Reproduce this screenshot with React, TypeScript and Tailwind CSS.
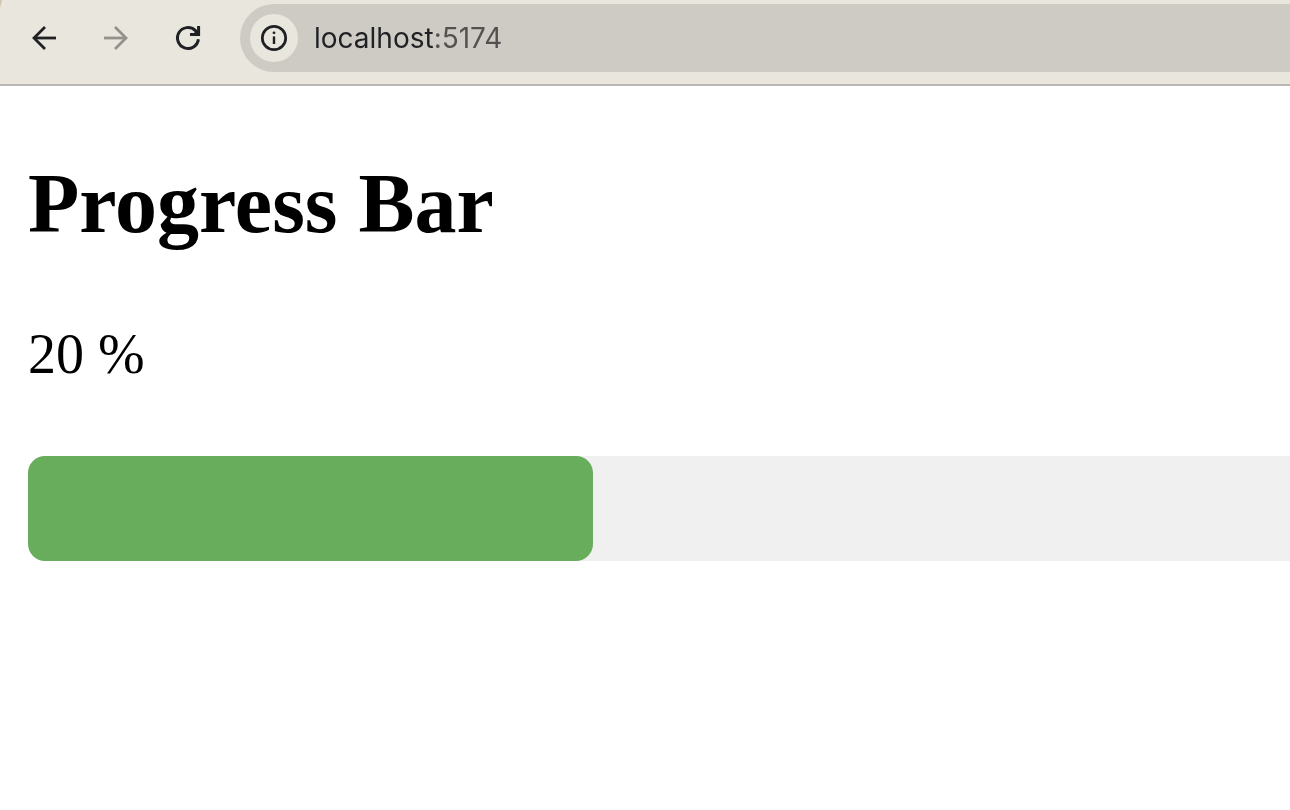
import React from "react";

const PROGRESS = 20;

function BackIcon() {
  return (
    <svg viewBox="0 0 32 32" className="size-8" fill="none" stroke="currentColor" strokeWidth="2.8" aria-hidden="true">
      <path d="M28 16H6" />
      <path d="M17 5L6 16L17 27" />
    </svg>
  );
}

function ForwardIcon() {
  return (
    <svg viewBox="0 0 32 32" className="size-8" fill="none" stroke="currentColor" strokeWidth="2.8" aria-hidden="true">
      <path d="M4 16H26" />
      <path d="M15 5L26 16L15 27" />
    </svg>
  );
}

function ReloadIcon() {
  return (
    <svg viewBox="0 0 32 32" className="size-8" fill="none" stroke="currentColor" strokeWidth="3" aria-hidden="true">
      <path d="M26.4 17.3A10.5 10.5 0 1 1 23.2 8.4L26 11.5" />
      <path d="M26.6 4V12.5H18" />
      <path d="M21 12L25.5 7.5V12Z" fill="currentColor" stroke="none" />
    </svg>
  );
}

function InfoIcon() {
  return (
    <svg viewBox="0 0 32 32" className="size-8" fill="none" stroke="currentColor" strokeWidth="2.7" aria-hidden="true">
      <circle cx="16" cy="16" r="11.7" />
      <path d="M16 14.4V22" strokeWidth="2.4" />
      <circle cx="16" cy="10.8" r="1.4" fill="currentColor" stroke="none" />
    </svg>
  );
}

function Toolbar() {
  return (
    <header className="relative flex h-[86px] items-start border-b-2 border-[#bbb8b4] bg-[#e9e6dd] pt-1 pl-7 text-[#1f2024]">
      <svg viewBox="0 0 3 9" className="absolute top-0 left-0 h-[9px] w-[3px]" aria-hidden="true">
        <path d="M0 0H2Q1 5 0 8Z" fill="#cfc4ac" />
      </svg>
      <nav aria-label="Browser controls" className="flex h-[68px] shrink-0 items-center gap-10 pr-9">
        <button type="button" aria-label="Back"><BackIcon /></button>
        <button type="button" aria-label="Forward" disabled className="text-[#93918d]"><ForwardIcon /></button>
        <button type="button" aria-label="Reload"><ReloadIcon /></button>
      </nav>
      <div className="flex h-[68px] min-w-0 flex-1 items-center gap-4 rounded-l-full bg-[#cecbc4] pl-[10px]">
        <button type="button" aria-label="View site information" className="flex size-12 shrink-0 items-center justify-center rounded-full bg-[#e9e6dd]">
          <InfoIcon />
        </button>
        <input
          type="text"
          aria-label="Address"
          defaultValue="localhost:5174"
          className="h-10 min-w-0 flex-1 bg-linear-to-r from-[#1f2024] from-[120px] to-[#525150] to-[120px] bg-clip-text font-['Inter','Liberation_Sans',sans-serif] text-[28px] text-transparent caret-black outline-none"
        />
      </div>
    </header>
  );
}

function ProgressBar({ value }: { value: number }) {
  return (
    <div
      role="progressbar"
      aria-label="Progress"
      aria-valuemin={0}
      aria-valuemax={100}
      aria-valuenow={value}
      className="h-[105px] w-[224%] rounded-[17px] bg-[#f0f0f0]"
    >
      <div className="h-full rounded-[17px] bg-[#68ad5c]" style={{ width: `${value}%` }} />
    </div>
  );
}

export default function App() {
  return (
    <div className="min-h-screen overflow-hidden bg-white text-black">
      <Toolbar />
      <main className="flex flex-col gap-[70px] pt-[70px] pl-7 font-['Liberation_Serif','Times_New_Roman',serif]">
        <h2 className="text-[84px] leading-[96px] font-bold">Progress Bar</h2>
        <p className="text-[56px] leading-[64px]">{PROGRESS} %</p>
        <ProgressBar value={PROGRESS} />
      </main>
    </div>
  );
}
